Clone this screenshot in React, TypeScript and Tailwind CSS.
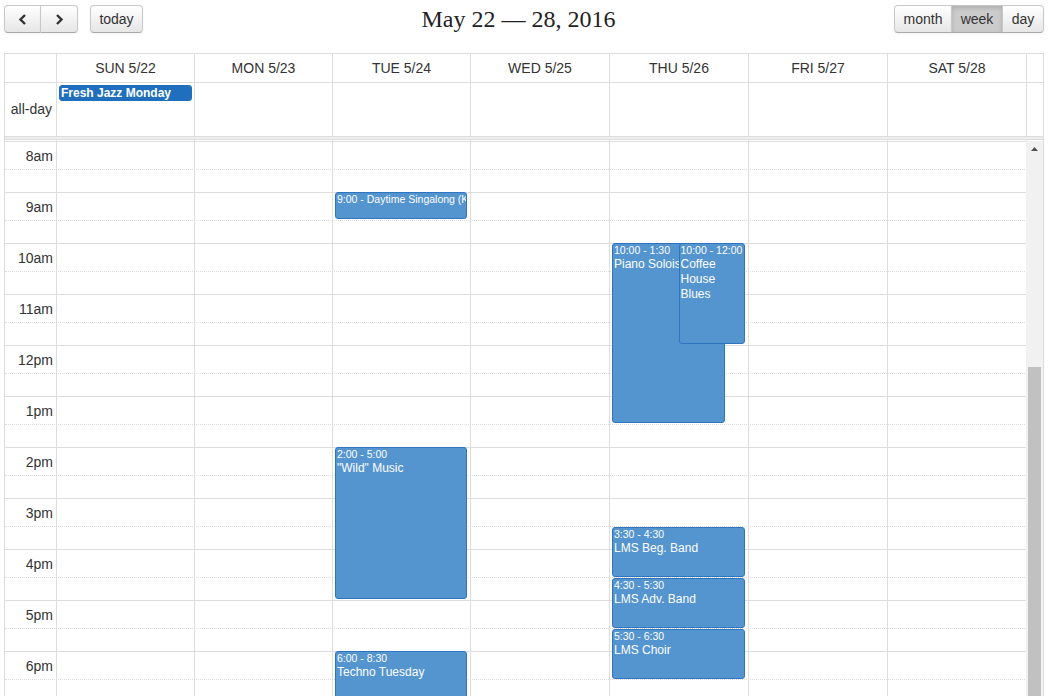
import React from "react";

const HOUR = 51;
const MAJOR = 28;
function ypos(t: number) {
  const h = Math.floor(t);
  const f = t - h;
  return h * HOUR + (f >= 0.5 ? MAJOR : 0);
}

const labels = ["8am", "9am", "10am", "11am", "12pm", "1pm", "2pm", "3pm", "4pm", "5pm", "6pm"];
const days = ["SUN 5/22", "MON 5/23", "TUE 5/24", "WED 5/25", "THU 5/26", "FRI 5/27", "SAT 5/28"];

const COLS = "grid-cols-[52px_138px_138px_138px_139px_139px_139px_139px_16px]";

type Ev = {
  day: number;
  s: number;
  e: number;
  time: string;
  title: string;
  left?: string;
  right?: string;
  short?: boolean;
};

const events: Ev[] = [
  { day: 2, s: 1, e: 1.5, time: "9:00", title: "Daytime Singalong (Kids)", short: true },
  { day: 2, s: 6, e: 9, time: "2:00 - 5:00", title: '"Wild" Music' },
  { day: 2, s: 10, e: 12.5, time: "6:00 - 8:30", title: "Techno Tuesday" },
  { day: 4, s: 2, e: 5.5, time: "10:00 - 1:30", title: "Piano Soloist", left: "0%", right: "15.2%" },
  { day: 4, s: 2, e: 4, time: "10:00 - 12:00", title: "Coffee House Blues", left: "50%", right: "0%" },
  { day: 4, s: 7.5, e: 8.5, time: "3:30 - 4:30", title: "LMS Beg. Band" },
  { day: 4, s: 8.5, e: 9.5, time: "4:30 - 5:30", title: "LMS Adv. Band" },
  { day: 4, s: 9.5, e: 10.5, time: "5:30 - 6:30", title: "LMS Choir" },
];

function Btn({
  children,
  className = "",
  active = false,
}: {
  children: React.ReactNode;
  className?: string;
  active?: boolean;
}) {
  return (
    <button
      className={`flex h-[28px] items-center justify-center border border-[#c8c8c8] border-b-[#a9a9a9] text-[14px] text-[#333] ${
        active
          ? "bg-[#cbcbcb] shadow-[inset_0_2px_4px_rgba(0,0,0,0.15),0_1px_2px_rgba(0,0,0,0.05)]"
          : "bg-gradient-to-b from-white to-[#e6e6e6] shadow-[inset_0_1px_0_rgba(255,255,255,0.2),0_1px_2px_rgba(0,0,0,0.05)]"
      } ${className}`}
    >
      {children}
    </button>
  );
}

function Chevron({ left = false }: { left?: boolean }) {
  return (
    <svg width="9" height="11" viewBox="0 0 9 11">
      <polyline
        points={left ? "7,1 2.5,5.5 7,10" : "2,1 6.5,5.5 2,10"}
        fill="none"
        stroke="#333"
        strokeWidth="2.4"
      />
    </svg>
  );
}

export default function App() {
  return (
    <div className="h-[696px] w-[1050px] overflow-hidden bg-white font-['Liberation_Sans',Arial,sans-serif] text-[14px] text-[#333]">
      <div className="ml-[4px] w-[1040px] pt-[5px]">
        {/* toolbar */}
        <div className="mb-[20px] flex h-[28px] items-center">
          <div className="flex items-center">
            <div className="flex">
              <Btn className="w-[37px] rounded-l-[4px]">
                <Chevron left />
              </Btn>
              <Btn className="-ml-px w-[38px] rounded-r-[4px]">
                <Chevron />
              </Btn>
            </div>
            <Btn className="ml-[12px] w-[53px] rounded-[4px]">today</Btn>
          </div>
          <div className="flex-1 text-center font-['Liberation_Serif',serif] text-[24px] leading-[28px] text-[#222]">
            May 22 — 28, 2016
          </div>
          <div className="flex">
            <Btn className="w-[58px] rounded-l-[4px]">month</Btn>
            <Btn active className="-ml-px w-[52px]">
              week
            </Btn>
            <Btn className="-ml-px w-[42px] rounded-r-[4px]">day</Btn>
          </div>
        </div>

        {/* calendar */}
        <div className="border border-[#ddd]">
          {/* header */}
          <div className={`grid h-[29px] ${COLS} border-b border-[#ddd]`}>
            <div className="border-r border-[#ddd]" />
            {days.map((d) => (
              <div key={d} className="flex items-center justify-center border-r border-[#ddd]">
                {d}
              </div>
            ))}
            <div />
          </div>

          {/* all-day */}
          <div className={`grid h-[53px] ${COLS}`}>
            <div className="flex items-center justify-end border-r border-[#ddd] pr-[4px]">all-day</div>
            {days.map((d, i) => (
              <div key={d} className="border-r border-[#ddd]">
                {i === 0 && (
                  <div className="mx-[2px] mt-[2px] overflow-hidden whitespace-nowrap rounded-[3px] border border-[#1f6fbe] bg-[#1f6fbe] px-[1px] text-[12px] font-bold leading-[14px] text-white">
                    Fresh Jazz Monday
                  </div>
                )}
              </div>
            ))}
            <div />
          </div>

          {/* divider */}
          <div className="h-[4px] border-y border-[#ddd] bg-[#eee]" />
          <div className={`grid h-[1px] ${COLS}`}>
            <div className="border-r border-[#ddd]" />
            {days.map((d) => (
              <div key={d} className="border-r border-[#ddd]" />
            ))}
            <div />
          </div>

          {/* time grid */}
          <div className="relative h-[560px] overflow-hidden">
            <div className="border-t border-[#ddd]">
              {labels.map((l) => (
                <div key={l}>
                  <div className="flex h-[28px] items-center justify-end border-b border-dotted border-[#ddd]">
                    <div className="w-[52px] pr-[4px] pt-[1px] text-right">{l}</div>
                    <div className="flex-1" />
                  </div>
                  <div className="h-[23px] border-b border-[#ddd]" />
                </div>
              ))}
            </div>

            {/* columns overlay */}
            <div className={`absolute inset-0 grid ${COLS}`}>
              <div className="border-r border-[#ddd]" />
              {days.map((d, i) => (
                <div key={d} className="relative border-r border-[#ddd]">
                  <div className="absolute inset-y-0 left-[2px] right-[3px]">
                    {events
                      .filter((ev) => ev.day === i)
                      .map((ev) => {
                        const top = ypos(ev.s) + (ev.s % 1 ? 1 : 0);
                        const height = ypos(ev.e) - ypos(ev.s) - 1;
                        return (
                          <div
                            key={ev.title}
                            className="absolute overflow-hidden rounded-[3px] border border-[#2f74bf] bg-[#5494cf] text-white"
                            style={{ top, height, left: ev.left ?? "0%", right: ev.right ?? "0%" }}
                          >
                            {ev.short ? (
                              <div className="whitespace-nowrap px-[1px] text-[10.5px] leading-[13px]">
                                {ev.time} - {ev.title}
                              </div>
                            ) : (
                              <div className="px-[1px]">
                                <div className="whitespace-nowrap text-[10.5px] leading-[13px]">{ev.time}</div>
                                <div className="text-[12px] leading-[15px]">{ev.title}</div>
                              </div>
                            )}
                          </div>
                        );
                      })}
                  </div>
                </div>
              ))}
              <div />
            </div>

            {/* scrollbar */}
            <div className="absolute bottom-0 right-0 top-0 w-[17px] bg-[#f1f1f1]">
              <div className="flex h-[15px] items-center justify-center">
                <svg width="7" height="4" viewBox="0 0 7 4">
                  <polygon points="0,4 3.5,0 7,4" fill="#505050" />
                </svg>
              </div>
              <div className="absolute bottom-0 left-[2px] right-[2px] top-[226px] bg-[#c1c1c1]" />
            </div>
          </div>
        </div>
      </div>
    </div>
  );
}
